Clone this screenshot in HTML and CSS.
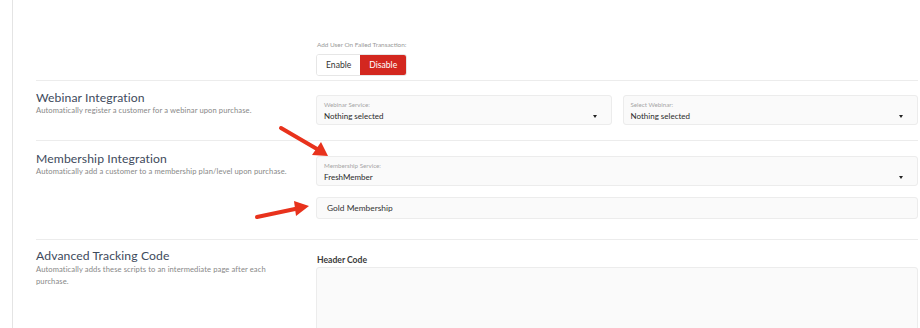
FILE: index.html
```html
<!DOCTYPE html>
<html>
<head>
<meta charset="utf-8">
<link rel="stylesheet" href="styles.css">
</head>
<body>
<div class="page">
  <section class="row row-top">
    <div class="left"></div>
    <div class="right">
      <div class="tiny-label">Add User On Failed Transaction:</div>
      <div class="btn-group">
        <span class="btn">Enable</span>
        <span class="btn btn-active">Disable</span>
      </div>
    </div>
  </section>

  <section class="row row-webinar">
    <div class="left">
      <h2 class="title">Webinar Integration</h2>
      <p class="sub">Automatically register a customer for a webinar upon purchase.</p>
    </div>
    <div class="right right-split">
      <div class="select">
        <div class="select-label">Webinar Service:</div>
        <div class="select-value">Nothing selected<span class="caret"></span></div>
      </div>
      <div class="select">
        <div class="select-label">Select Webinar:</div>
        <div class="select-value">Nothing selected<span class="caret"></span></div>
      </div>
    </div>
  </section>

  <section class="row row-member">
    <div class="left">
      <h2 class="title">Membership Integration</h2>
      <p class="sub">Automatically add a customer to a membership plan/level upon purchase.</p>
    </div>
    <div class="right right-stack">
      <div class="select">
        <div class="select-label">Membership Service:</div>
        <div class="select-value">FreshMember<span class="caret"></span></div>
      </div>
      <div class="input">Gold Membership</div>
    </div>
  </section>

  <section class="row row-track">
    <div class="left">
      <h2 class="title">Advanced Tracking Code</h2>
      <p class="sub sub-wrap">Automatically adds these scripts to an intermediate page after each purchase.</p>
    </div>
    <div class="right">
      <div class="code-label">Header Code</div>
      <div class="textarea"></div>
    </div>
  </section>

  <svg class="arrow arrow-1" width="60" height="40" viewBox="0 0 60 40">
    <line x1="4" y1="4" x2="40" y2="25" class="shaft"/>
    <polygon points="51,32 35,31 44,18" class="head"/>
  </svg>
  <svg class="arrow arrow-2" width="70" height="30" viewBox="0 0 70 30">
    <line x1="4" y1="21" x2="42" y2="13" class="shaft"/>
    <polygon points="56,10 41,5 43,20" class="head"/>
  </svg>
</div>
</body>
</html>
```

FILE: styles.css
```css
* { box-sizing: border-box; }
html, body { margin: 0; padding: 0; background: #fff; }
body {
  font-family: "Lato", "Noto Sans", sans-serif;
  color: #333;
  overflow: hidden;
}
.page {
  position: relative;
  margin-left: 12px;
  border-left: 1px solid #e4e4e4;
  height: 328px;
  overflow: hidden;
  padding-left: 23px;
  padding-right: 2px;
}
.row {
  display: grid;
  grid-template-columns: 280px 1fr;
  border-bottom: 1px solid #ececec;
}
.left { padding-right: 10px; }
.title {
  margin: 0;
  font-size: 12.2px;
  line-height: 15px;
  font-weight: 400;
  color: #3e4a5c;
  letter-spacing: 0.1px;
}
.sub {
  margin: 0;
  font-size: 7.6px;
  line-height: 11px;
  color: #888;
  letter-spacing: 0.1px;
}
.sub-wrap { max-width: 240px; line-height: 12px; }

.row-top { height: 81px; padding-top: 40px; }
.tiny-label {
  font-size: 6.4px;
  line-height: 10px;
  color: #999;
  padding-left: 1px;
  margin-bottom: 2px;
}
.btn-group {
  display: inline-flex;
  border: 1px solid #e6e6e6;
  border-radius: 3px;
  overflow: hidden;
  height: 22px;
}
.btn {
  display: flex;
  align-items: center;
  padding: 0 9px;
  font-size: 8.6px;
  color: #333;
  background: #fff;
}
.btn-active { background: #d3271f; color: #fff; padding: 0 9px; }

.row-webinar { height: 60px; padding-top: 9px; }
.row-webinar .right { padding-top: 5px; }
.right-split { display: grid; grid-template-columns: 1fr 1fr; gap: 11px; }
.select {
  background: #fafafa;
  border: 1px solid #ececec;
  border-radius: 3px;
  padding: 4px 7px 3px 7px;
  height: 30px;
}
.select-label {
  font-size: 6.2px;
  line-height: 9px;
  color: #a5a5a5;
  margin-bottom: 1px;
}
.select-value {
  position: relative;
  font-size: 8px;
  line-height: 12px;
  color: #2a2a2a;
}
.caret {
  position: absolute;
  right: 7px;
  top: 5px;
  width: 0; height: 0;
  border-left: 2.5px solid transparent;
  border-right: 2.5px solid transparent;
  border-top: 3px solid #222;
}

.row-member { height: 99px; padding-top: 10px; }
.row-member .right { padding-top: 5px; }
.right-stack { display: flex; flex-direction: column; gap: 11px; align-self: start; }
.input {
  background: #fafafa;
  border: 1px solid #ececec;
  border-radius: 3px;
  height: 22px;
  padding: 0 10px;
  display: flex;
  align-items: center;
  font-size: 8.4px;
  color: #333;
}

.row-track { border-bottom: none; padding-top: 8px; }
.code-label {
  font-size: 8.6px;
  font-weight: 700;
  color: #3a3a3a;
  line-height: 12px;
  margin-top: 6px;
  padding-left: 1px;
  margin-bottom: 1px;
}
.textarea {
  background: #fafafa;
  border: 1px solid #ececec;
  border-radius: 3px;
  height: 80px;
}

.arrow { position: absolute; overflow: visible; }
.arrow .shaft { stroke: #e8321c; stroke-width: 4; stroke-linecap: round; }
.arrow .head { fill: #e8321c; }
.arrow-1 { left: 264px; top: 124px; }
.arrow-2 { left: 240px; top: 196px; }
```
